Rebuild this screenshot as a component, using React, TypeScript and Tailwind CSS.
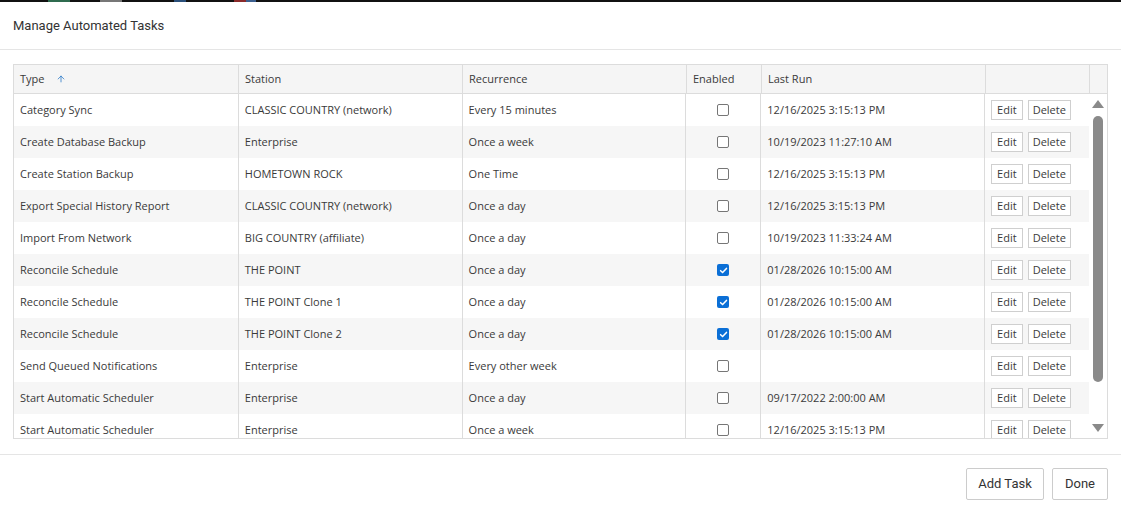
import { ArrowUp } from 'lucide-react';

type Task = {
  type: string;
  station: string;
  recurrence: string;
  enabled: boolean;
  lastRun: string;
};

const tasks: Task[] = [
  { type: 'Category Sync', station: 'CLASSIC COUNTRY (network)', recurrence: 'Every 15 minutes', enabled: false, lastRun: '12/16/2025 3:15:13 PM' },
  { type: 'Create Database Backup', station: 'Enterprise', recurrence: 'Once a week', enabled: false, lastRun: '10/19/2023 11:27:10 AM' },
  { type: 'Create Station Backup', station: 'HOMETOWN ROCK', recurrence: 'One Time', enabled: false, lastRun: '12/16/2025 3:15:13 PM' },
  { type: 'Export Special History Report', station: 'CLASSIC COUNTRY (network)', recurrence: 'Once a day', enabled: false, lastRun: '12/16/2025 3:15:13 PM' },
  { type: 'Import From Network', station: 'BIG COUNTRY (affiliate)', recurrence: 'Once a day', enabled: false, lastRun: '10/19/2023 11:33:24 AM' },
  { type: 'Reconcile Schedule', station: 'THE POINT', recurrence: 'Once a day', enabled: true, lastRun: '01/28/2026 10:15:00 AM' },
  { type: 'Reconcile Schedule', station: 'THE POINT Clone 1', recurrence: 'Once a day', enabled: true, lastRun: '01/28/2026 10:15:00 AM' },
  { type: 'Reconcile Schedule', station: 'THE POINT Clone 2', recurrence: 'Once a day', enabled: true, lastRun: '01/28/2026 10:15:00 AM' },
  { type: 'Send Queued Notifications', station: 'Enterprise', recurrence: 'Every other week', enabled: false, lastRun: '' },
  { type: 'Start Automatic Scheduler', station: 'Enterprise', recurrence: 'Once a day', enabled: false, lastRun: '09/17/2022 2:00:00 AM' },
  { type: 'Start Automatic Scheduler', station: 'Enterprise', recurrence: 'Once a week', enabled: false, lastRun: '12/16/2025 3:15:13 PM' },
];

function Checkbox({ checked }: { checked: boolean }) {
  if (checked) {
    return (
      <span className="w-[12px] h-[12px] rounded-[2px] bg-[#0b6fd6] flex items-center justify-center">
        <svg width="9" height="9" viewBox="0 0 10 10">
          <path d="M1.8 5.2 L4 7.3 L8.3 2.7" fill="none" stroke="white" strokeWidth="1.7" strokeLinecap="round" strokeLinejoin="round" />
        </svg>
      </span>
    );
  }
  return <span className="w-[12px] h-[12px] rounded-[2px] border border-[#767676] bg-white" />;
}

function Scrollbar() {
  return (
    <div className="w-[18px] flex flex-col items-center bg-white">
      <svg width="12" height="8" viewBox="0 0 12 8" className="mt-[6px]">
        <path d="M6 0 L12 8 L0 8 Z" fill="#8a8a8a" />
      </svg>
      <div className="w-[10px] h-[266px] rounded-full bg-[#8a8a8a] mt-[8px]" />
      <div className="flex-1" />
      <svg width="12" height="8" viewBox="0 0 12 8" className="mb-[6px]">
        <path d="M0 0 L12 0 L6 8 Z" fill="#8a8a8a" />
      </svg>
    </div>
  );
}

export default function App() {
  return (
    <div className="w-[1121px] h-[514px] bg-white text-[#3a3a3a] flex flex-col" style={{ fontFamily: '"Open Sans", "Noto Sans", sans-serif' }}>
      <div className="h-[2px] bg-[#111] flex">
        <span className="ml-[48px] w-[22px] bg-[#2f6b4f]" />
        <span className="ml-[30px] w-[22px] bg-[#777]" />
        <span className="ml-[52px] w-[12px] bg-[#2a4f7a]" />
        <span className="ml-[48px] w-[12px] bg-[#8a2a2a]" />
        <span className="w-[10px] bg-[#3c5f8e]" />
      </div>
      <div className="h-[48px] flex items-center px-[13px] border-b border-[#e5e5e5] text-[13px] text-[#333]" style={{ fontFamily: 'Roboto, sans-serif' }}>
        Manage Automated Tasks
      </div>
      <div className="px-[13px] pt-[14px] pb-[15px]">
        <div className="border border-[#dcdcdc] text-[11px] h-[375px] flex flex-col">
          <div className="flex h-[29px] bg-[#f5f5f5] border-b border-[#dcdcdc] shrink-0">
            <div className="w-[225px] px-[6px] flex items-center border-r border-[#dcdcdc]">
              Type
              <ArrowUp size={10} strokeWidth={1.75} className="ml-[12px] text-[#1a6fc4]" />
            </div>
            <div className="w-[224px] px-[6px] flex items-center border-r border-[#dcdcdc]">Station</div>
            <div className="w-[224px] px-[6px] flex items-center border-r border-[#dcdcdc]">Recurrence</div>
            <div className="w-[75px] px-[6px] flex items-center border-r border-[#dcdcdc]">Enabled</div>
            <div className="w-[224px] px-[6px] flex items-center border-r border-[#dcdcdc]">Last Run</div>
            <div className="w-[104px] border-r border-[#dcdcdc]" />
            <div className="flex-1" />
          </div>
          <div className="flex flex-1 overflow-hidden">
            <div className="w-[1075px] overflow-hidden">
              {tasks.map((t, i) => (
                <div key={i} className={`flex h-[32px] ${i % 2 === 1 ? 'bg-[#f6f6f6]' : 'bg-white'}`}>
                  <div className="w-[225px] px-[6px] flex items-center border-r border-[#dcdcdc]">{t.type}</div>
                  <div className="w-[224px] px-[6px] flex items-center border-r border-[#dcdcdc]">{t.station}</div>
                  <div className="w-[224px] px-[6px] flex items-center border-r border-[#dcdcdc]">{t.recurrence}</div>
                  <div className="w-[75px] flex items-center justify-center border-r border-[#dcdcdc]">
                    <Checkbox checked={t.enabled} />
                  </div>
                  <div className="w-[224px] px-[6px] flex items-center border-r border-[#dcdcdc]">{t.lastRun}</div>
                  <div className="w-[104px] flex items-center gap-[5px] pl-[6px]">
                    <button className="h-[20px] px-[5px] border border-[#cfcfcf] bg-white text-[11px] text-[#3a3a3a]">Edit</button>
                    <button className="h-[20px] px-[4px] border border-[#cfcfcf] bg-white text-[11px] text-[#3a3a3a]">Delete</button>
                  </div>
                </div>
              ))}
            </div>
            <Scrollbar />
          </div>
        </div>
      </div>
      <div className="border-t border-[#e5e5e5] flex justify-end gap-[8px] px-[13px] pt-[13px]" style={{ fontFamily: 'Roboto, sans-serif' }}>
        <button className="h-[32px] w-[78px] border border-[#cccccc] rounded-[2px] bg-white text-[13px] text-[#333]">Add Task</button>
        <button className="h-[32px] w-[56px] border border-[#cccccc] rounded-[2px] bg-white text-[13px] text-[#333]">Done</button>
      </div>
    </div>
  );
}
